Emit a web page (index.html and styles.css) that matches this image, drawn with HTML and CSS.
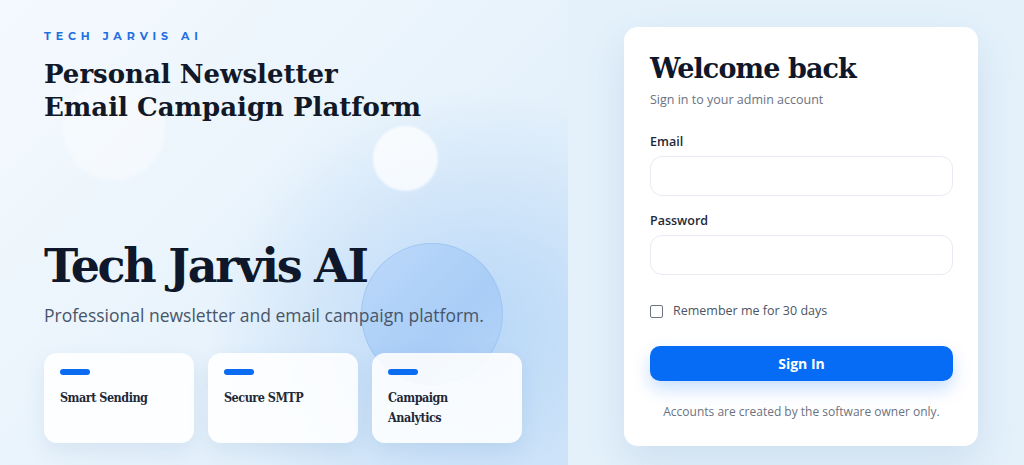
FILE: index.html
```html
<!DOCTYPE html>
<html lang="en">
<head>
<meta charset="utf-8">
<title>Tech Jarvis AI — Sign in</title>
<link rel="stylesheet" href="styles.css">
</head>
<body>
<div class="page">
  <section class="hero">
    <div class="blob blob-a"></div>
    <div class="blob blob-b"></div>
    <div class="blob blob-c"></div>
    <div class="hero-top">
      <div class="eyebrow">TECH JARVIS AI</div>
      <h1 class="tagline">Personal Newsletter<br>Email Campaign Platform</h1>
    </div>
    <div class="hero-bottom">
      <h2 class="brand">Tech Jarvis AI</h2>
      <p class="lead">Professional newsletter and email campaign platform.</p>
      <div class="features">
        <div class="feature"><span class="bar"></span><div class="feature-title">Smart Sending</div></div>
        <div class="feature"><span class="bar"></span><div class="feature-title">Secure SMTP</div></div>
        <div class="feature"><span class="bar"></span><div class="feature-title">Campaign<br>Analytics</div></div>
      </div>
    </div>
  </section>
  <section class="auth">
    <form class="card">
      <h3 class="card-title">Welcome back</h3>
      <p class="card-sub">Sign in to your admin account</p>
      <label class="field-label">Email</label>
      <input class="input" type="email">
      <label class="field-label">Password</label>
      <input class="input" type="password">
      <label class="remember"><span class="check"></span>Remember me for 30 days</label>
      <button class="btn" type="button">Sign In</button>
      <p class="note">Accounts are created by the software owner only.</p>
    </form>
  </section>
</div>
</body>
</html>
```

FILE: styles.css
```css
* { box-sizing: border-box; }
html, body { margin: 0; padding: 0; }
body {
  font-family: "Open Sans", "Noto Sans", sans-serif;
  background: #e4f1fb;
  color: #0f172a;
}
.page {
  display: flex;
  height: 465px;
  overflow: hidden;
}
.hero {
  position: relative;
  width: 568px;
  flex: none;
  padding: 28px 44px 0 44px;
  overflow: hidden;
  background:
    radial-gradient(ellipse 260px 240px at 470px 330px, rgba(170, 207, 246, 0.75), rgba(170, 207, 246, 0) 100%),
    linear-gradient(135deg, #f4f9fe 0%, #eaf4fc 45%, #d9eaf9 100%);
}
.blob { position: absolute; border-radius: 50%; }
.blob-a {
  left: 63px; top: 78px; width: 102px; height: 102px;
  background: rgba(255, 255, 255, 0.4);
  filter: blur(2px);
}
.blob-b {
  left: 373px; top: 126px; width: 65px; height: 65px;
  background: rgba(255, 255, 255, 0.75);
  filter: blur(1px);
}
.blob-c {
  left: 361px; top: 243px; width: 142px; height: 142px;
  background: linear-gradient(135deg, #bcd9f9 0%, #a9cdf7 60%, #b5d4f7 100%);
  border: 1px solid rgba(140, 185, 240, 0.45);
}
.hero-top, .hero-bottom { position: relative; }
.eyebrow {
  font-family: "Montserrat", "DejaVu Sans", sans-serif;
  font-size: 11px;
  font-weight: 700;
  letter-spacing: 4.9px;
  color: #1f6fe0;
  line-height: 16px;
}
.tagline {
  margin: 14px 0 0 0;
  font-family: "DejaVu Serif", serif;
  font-weight: 700;
  font-size: 26px;
  line-height: 33px;
  letter-spacing: 0;
  color: #111827;
}
.hero-bottom { margin-top: 114px; }
.brand {
  margin: 0;
  font-family: "DejaVu Serif", serif;
  font-weight: 700;
  font-size: 46px;
  line-height: 56px;
  letter-spacing: -2.3px;
  color: #0f172a;
}
.lead {
  margin: 9px 0 0 0;
  font-size: 17.5px;
  line-height: 24px;
  color: #475569;
}
.features {
  display: flex;
  gap: 14px;
  margin-top: 26px;
}
.feature {
  width: 150px;
  height: 90px;
  background: rgba(255, 255, 255, 0.88);
  border-radius: 13px;
  padding: 16px 16px;
  box-shadow: 0 8px 20px rgba(80, 120, 170, 0.12);
}
.bar {
  display: block;
  width: 30px;
  height: 6px;
  border-radius: 3px;
  background: #0b6cf2;
}
.feature-title {
  margin-top: 13px;
  font-family: "DejaVu Serif Condensed", "DejaVu Serif", serif;
  font-stretch: condensed;
  font-weight: 700;
  font-size: 12.5px;
  line-height: 20px;
  letter-spacing: -0.5px;
  color: #1f2937;
}
.auth {
  flex: 1;
  padding: 27px 0 0 56px;
}
.card {
  width: 354px;
  height: 419px;
  background: #ffffff;
  border-radius: 14px;
  padding: 22px 25px 0 26px;
  box-shadow: 0 16px 40px rgba(70, 110, 160, 0.14);
  display: flex;
  flex-direction: column;
}
.card-title {
  margin: 0;
  font-family: "DejaVu Serif", serif;
  font-weight: 700;
  font-size: 27px;
  line-height: 40px;
  letter-spacing: -0.9px;
  color: #0f172a;
}
.card-sub {
  margin: 2px 0 0 0;
  font-size: 12.5px;
  line-height: 18px;
  color: #6b7280;
}
.field-label {
  margin-top: 24px;
  font-size: 12.5px;
  font-weight: 600;
  line-height: 18px;
  color: #1f2937;
}
.input + .field-label { margin-top: 16px; }
.input {
  margin-top: 5px;
  height: 40px;
  width: 100%;
  border: 1px solid #e6ebf1;
  border-radius: 12px;
  background: #fff;
  outline: none;
}
.remember {
  margin-top: 27px;
  display: flex;
  align-items: center;
  gap: 10px;
  font-size: 12.5px;
  line-height: 18px;
  color: #4b5563;
}
.check {
  width: 13px;
  height: 13px;
  border: 1.5px solid #6b7280;
  border-radius: 2px;
  background: #fff;
}
.btn {
  margin-top: 26px;
  height: 35px;
  width: 100%;
  border: none;
  border-radius: 10px;
  background: #066cf6;
  color: #fff;
  font-family: "Open Sans", "Noto Sans", sans-serif;
  font-size: 14px;
  font-weight: 700;
  box-shadow: 0 8px 18px rgba(6, 108, 246, 0.22);
}
.note {
  margin: 23px 0 0 0;
  text-align: center;
  font-size: 12px;
  line-height: 16px;
  color: #6b7280;
}
```
